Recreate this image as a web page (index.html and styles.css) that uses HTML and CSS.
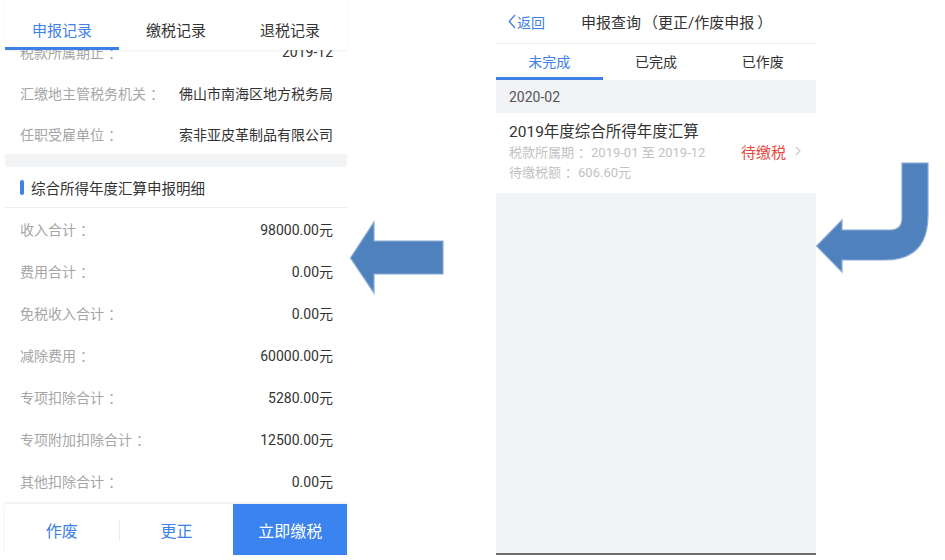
FILE: index.html
```html
<!DOCTYPE html>
<html lang="zh-CN">
<head>
<meta charset="utf-8">
<title>申报查询</title>
<link rel="stylesheet" href="styles.css">
</head>
<body>
<div class="canvas">
  <section class="phone-left">
    <nav class="tabs-left">
      <div class="tab active">申报记录</div>
      <div class="tab">缴税记录</div>
      <div class="tab">退税记录</div>
    </nav>
    <div class="scroll">
      <div class="info clipped"><span class="label">税款所属期止<span class="colon">：</span></span><span class="value">2019-12</span></div>
      <div class="info"><span class="label">汇缴地主管税务机关<span class="colon">：</span></span><span class="value">佛山市南海区地方税务局</span></div>
      <div class="info"><span class="label">任职受雇单位<span class="colon">：</span></span><span class="value">索非亚皮革制品有限公司</span></div>
      <div class="band"></div>
      <div class="section-title"><i class="bar"></i><span>综合所得年度汇算申报明细</span></div>
      <div class="detail"><span class="label">收入合计<span class="colon">：</span></span><span class="value">98000.00元</span></div>
      <div class="detail"><span class="label">费用合计<span class="colon">：</span></span><span class="value">0.00元</span></div>
      <div class="detail"><span class="label">免税收入合计<span class="colon">：</span></span><span class="value">0.00元</span></div>
      <div class="detail"><span class="label">减除费用<span class="colon">：</span></span><span class="value">60000.00元</span></div>
      <div class="detail"><span class="label">专项扣除合计<span class="colon">：</span></span><span class="value">5280.00元</span></div>
      <div class="detail"><span class="label">专项附加扣除合计<span class="colon">：</span></span><span class="value">12500.00元</span></div>
      <div class="detail"><span class="label">其他扣除合计<span class="colon">：</span></span><span class="value">0.00元</span></div>
    </div>
    <footer class="actions">
      <div class="act">作废</div>
      <span class="sep"></span>
      <div class="act">更正</div>
      <div class="act primary">立即缴税</div>
    </footer>
  </section>

  <svg class="arrow-left" width="149" height="560" viewBox="0 0 149 560">
    <path d="M3.5,258 L27,222 L27,241 L96,241 L96,274 L27,274 L27,293 Z" fill="#4f81bd" stroke="#8aaad6" stroke-width="1.2"/>
  </svg>

  <section class="phone-right">
    <header class="topbar">
      <div class="back">
        <svg class="back-icon" width="8" height="15" viewBox="0 0 8 15"><path d="M7,1 L1.2,7.5 L7,14" fill="none" stroke="#3d80e6" stroke-width="1.3"/></svg>
        <span>返回</span>
      </div>
      <div class="title">申报查询<span class="paren-open">（</span>更正/作废申报<span class="paren-close">）</span></div>
    </header>
    <nav class="tabs-right">
      <div class="tab active">未完成</div>
      <div class="tab">已完成</div>
      <div class="tab">已作废</div>
    </nav>
    <div class="month">2020-02</div>
    <div class="item">
      <div class="item-main">
        <div class="item-title">2019年度综合所得年度汇算</div>
        <div class="item-sub">税款所属期<span class="colon">：</span>2019-01 至 2019-12</div>
        <div class="item-sub">待缴税额<span class="colon">：</span>606.60元</div>
      </div>
      <div class="status">
        <span>待缴税</span>
        <svg width="6" height="10" viewBox="0 0 6 10"><path d="M1,1 L5,5 L1,9" fill="none" stroke="#c8c8c8" stroke-width="1.1"/></svg>
      </div>
    </div>
    <div class="rest"></div>
  </section>

  <svg class="arrow-curve" width="129" height="560" viewBox="0 0 129 560">
    <path d="M86,163 L112,163 L112,215 Q112,260 69,260 L26,260 L26,272 L0.5,246 L26,220 L26,230 L74,230 Q86,230 86,218 Z" fill="#4f81bd" stroke="#8aaad6" stroke-width="1.2"/>
  </svg>
</div>
</body>
</html>
```

FILE: styles.css
```css
* {
  box-sizing: border-box;
  margin: 0;
  padding: 0;
}

body {
  margin: 0;
  background: #ffffff;
  font-family: Roboto, "Noto Sans CJK SC", sans-serif;
}

.canvas {
  display: flex;
  align-items: flex-start;
  width: 945px;
  height: 560px;
  overflow: hidden;
  background: #ffffff;
}

/* full-width punctuation sits centred in its cell on the device */
.colon {
  padding-left: 4px;
}

.paren-open {
  padding-left: 2px;
}

.paren-close {
  padding-left: 3px;
}

/* ---------- left phone ---------- */
.phone-left {
  margin-left: 5px;
  width: 342px;
  height: 555px;
  display: flex;
  flex-direction: column;
  background: #ffffff;
}

.tabs-left {
  display: flex;
  height: 50px;
  flex: none;
  position: relative;
  z-index: 1;
  background: #ffffff;
  box-shadow: 0 1px 2px rgba(0, 0, 0, 0.07);
}

.tabs-left .tab {
  flex: 1;
  height: 50px;
  text-align: center;
  padding-top: 21px;
  line-height: 20px;
  font-size: 15px;
  color: #333333;
}

.tabs-left .tab.active {
  color: #3d80e6;
  border-bottom: 3px solid #3d80e6;
}

.scroll {
  flex: 1;
  overflow: hidden;
}

.info {
  display: flex;
  justify-content: space-between;
  align-items: center;
  height: 41px;
  padding: 0 14px 0 15px;
  font-size: 14px;
}

.info.clipped {
  margin-top: -19px;
}

.label {
  color: #a6a6a6;
}

.value {
  color: #333333;
}

.band {
  height: 13px;
  background: #f3f4f6;
}

.section-title {
  display: flex;
  align-items: center;
  gap: 7px;
  height: 41px;
  padding-left: 15px;
  font-size: 14.5px;
  color: #333333;
  border-bottom: 1px solid #eceef1;
}

.section-title .bar {
  display: block;
  width: 4px;
  height: 15px;
  border-radius: 2px;
  background: #3d80e6;
}

.detail {
  display: flex;
  justify-content: space-between;
  align-items: center;
  height: 42px;
  padding: 0 14px 0 15px;
  font-size: 14px;
}

.actions {
  flex: none;
  display: flex;
  align-items: center;
  height: 51px;
  background: #ffffff;
  box-shadow: 0 -1px 3px rgba(0, 0, 0, 0.09);
  position: relative;
  z-index: 1;
}

.act {
  flex: 1;
  height: 51px;
  display: flex;
  align-items: center;
  justify-content: center;
  font-size: 16px;
  color: #3d80e6;
}

.act.primary {
  background: #3b84f0;
  color: #ffffff;
}

.sep {
  width: 1px;
  height: 22px;
  background: #ececec;
}

/* ---------- arrows ---------- */
.arrow-left,
.arrow-curve {
  flex: none;
  display: block;
}

/* ---------- right phone ---------- */
.phone-right {
  width: 320px;
  height: 555px;
  flex: none;
  display: flex;
  flex-direction: column;
  background: #f2f3f7;
  border-bottom: 2px solid #6e6e6e;
}

.topbar {
  display: flex;
  align-items: center;
  height: 44px;
  padding-left: 12px;
  background: #ffffff;
  border-bottom: 1px solid #ececec;
}

.back {
  display: flex;
  align-items: center;
  gap: 1px;
  font-size: 14px;
  color: #3d80e6;
}

.back-icon {
  display: block;
}

.title {
  margin-left: 36px;
  font-size: 15px;
  color: #333333;
}

.tabs-right {
  display: flex;
  height: 36px;
  background: #ffffff;
}

.tabs-right .tab {
  flex: 1;
  height: 36px;
  text-align: center;
  padding-top: 8px;
  line-height: 20px;
  font-size: 14px;
  color: #333333;
}

.tabs-right .tab.active {
  color: #3d80e6;
  border-bottom: 3px solid #3d80e6;
}

.month {
  height: 33px;
  display: flex;
  align-items: center;
  padding-left: 13px;
  font-size: 14px;
  color: #555555;
}

.item {
  display: flex;
  align-items: center;
  justify-content: space-between;
  height: 80px;
  padding: 8px 15px 10px 13px;
  background: #ffffff;
}

.item-title {
  font-size: 15.5px;
  line-height: 22px;
  color: #333333;
}

.item-sub {
  font-size: 13px;
  line-height: 20px;
  color: #c2c2c2;
}

.status {
  display: flex;
  align-items: center;
  gap: 9px;
  font-size: 15px;
  color: #e5493f;
  margin-top: -2px;
}

.status svg {
  display: block;
}

.rest {
  flex: 1;
}
```
